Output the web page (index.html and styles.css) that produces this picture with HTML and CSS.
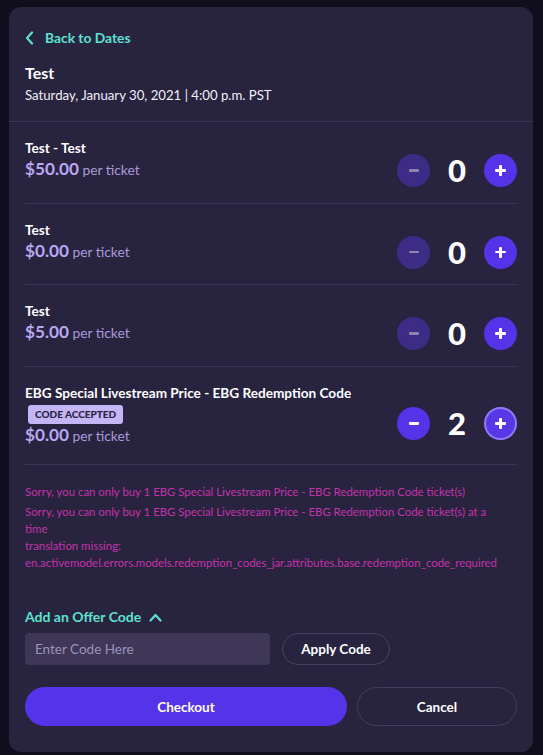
FILE: index.html
```html
<!DOCTYPE html>
<html>
<head>
<meta charset="utf-8">
<link rel="stylesheet" href="styles.css">
</head>
<body>
<div class="card">
  <div class="header">
    <a class="back">
      <svg width="9" height="14" viewBox="0 0 9 14"><path d="M7 1.5 L2 7 L7 12.5" fill="none" stroke="#5ce1cf" stroke-width="2.2" stroke-linecap="round" stroke-linejoin="round"/></svg>
      <span>Back to Dates</span>
    </a>
    <div class="title">Test</div>
    <div class="date">Saturday, January 30, 2021 | 4:00 p.m. PST</div>
  </div>
  <div class="tickets">
    <div class="row">
      <div class="info">
        <div class="name">Test - Test</div>
        <div class="price"><b>$50.00</b> per ticket</div>
      </div>
      <div class="qty">
        <button class="btn disabled"><span class="minus"></span></button>
        <span class="num">0</span>
        <button class="btn"><span class="plus"></span></button>
      </div>
    </div>
    <div class="row">
      <div class="info">
        <div class="name">Test</div>
        <div class="price"><b>$0.00</b> per ticket</div>
      </div>
      <div class="qty">
        <button class="btn disabled"><span class="minus"></span></button>
        <span class="num">0</span>
        <button class="btn"><span class="plus"></span></button>
      </div>
    </div>
    <div class="row">
      <div class="info">
        <div class="name">Test</div>
        <div class="price"><b>$5.00</b> per ticket</div>
      </div>
      <div class="qty">
        <button class="btn disabled"><span class="minus"></span></button>
        <span class="num">0</span>
        <button class="btn"><span class="plus"></span></button>
      </div>
    </div>
    <div class="row tall">
      <div class="info">
        <div class="name">EBG Special Livestream Price - EBG Redemption Code</div>
        <div class="badge">CODE ACCEPTED</div>
        <div class="price"><b>$0.00</b> per ticket</div>
      </div>
      <div class="qty">
        <button class="btn"><span class="minus"></span></button>
        <span class="num">2</span>
        <button class="btn focus"><span class="plus"></span></button>
      </div>
    </div>
  </div>
  <div class="errors">
    <p>Sorry, you can only buy 1 EBG Special Livestream Price - EBG Redemption Code ticket(s)</p>
    <p>Sorry, you can only buy 1 EBG Special Livestream Price - EBG Redemption Code ticket(s) at a time</p>
    <p>translation missing: en.activemodel.errors.models.redemption_codes_jar.attributes.base.redemption_code_required</p>
  </div>
  <div class="offer">
    <div class="offer-toggle">
      <span>Add an Offer Code</span>
      <svg width="13" height="9" viewBox="0 0 13 9"><path d="M1.5 7.5 L6.5 2 L11.5 7.5" fill="none" stroke="#5ce1cf" stroke-width="2.2" stroke-linecap="round" stroke-linejoin="round"/></svg>
    </div>
    <div class="offer-form">
      <input class="code" type="text" placeholder="Enter Code Here">
      <button class="apply">Apply Code</button>
    </div>
  </div>
  <div class="actions">
    <button class="checkout">Checkout</button>
    <button class="cancel">Cancel</button>
  </div>
</div>
</body>
</html>
```
FILE: styles.css
```css
* { box-sizing: border-box; }
html, body { margin: 0; padding: 0; }
body {
  background: #100d1c;
  font-family: Lato, "Noto Sans", sans-serif;
  color: #ffffff;
  width: 543px;
  height: 755px;
  overflow: hidden;
  padding: 7px 10px 0 9px;
}
.card {
  background: #28233f;
  border-radius: 12px;
  height: 745px;
  display: flex;
  flex-direction: column;
}
.header {
  padding: 22px 16px 17px;
  border-bottom: 1px solid #3b3554;
}
.back {
  display: flex;
  align-items: center;
  gap: 11px;
  color: #5ce1cf;
  font-weight: 700;
  font-size: 13.8px;
  line-height: 18px;
}
.title {
  margin-top: 16px;
  font-size: 16px;
  font-weight: 700;
  line-height: 20px;
}
.date {
  margin-top: 3px;
  font-size: 13.2px;
  line-height: 18px;
  color: #f2f0f7;
}
.tickets { padding: 0 16px; }
.row {
  display: flex;
  justify-content: space-between;
  align-items: flex-start;
  border-bottom: 1px solid #3b3554;
  height: 82px;
  padding-top: 17px;
}
.row:nth-child(2) { height: 81px; }
.row.tall { height: 98px; padding-top: 17px; }
.name {
  font-size: 13.6px;
  font-weight: 700;
  line-height: 18px;
}
.price {
  font-size: 13.8px;
  line-height: 24px;
  color: #a99bd9;
}
.price b {
  font-size: 17.2px;
  font-weight: 700;
  color: #b9a8f2;
}
.badge {
  display: inline-block;
  margin: 1px 0 0 3px;
  background: #c4b5f6;
  color: #28233f;
  font-size: 10px;
  font-weight: 900;
  line-height: 19px;
  padding: 0 7px;
  border-radius: 3px;
}
.tall .price { line-height: 22px; }
.qty {
  align-self: center;
  display: flex;
  align-items: center;
  margin-top: -1px;
}
.btn {
  width: 33px;
  height: 33px;
  border-radius: 50%;
  border: none;
  background: #5533e8;
  display: flex;
  align-items: center;
  justify-content: center;
  padding: 0;
}
.btn.disabled { background: #3d2c86; }
.btn.focus { box-shadow: inset 0 0 0 2px #8e7ae9; background: #5838e6; }
.minus {
  width: 10px;
  height: 2.5px;
  background: #ffffff;
  border-radius: 1px;
}
.disabled .minus { background: #8d86a6; }
.plus {
  width: 11px;
  height: 11px;
  position: relative;
}
.plus::before, .plus::after {
  content: "";
  position: absolute;
  background: #ffffff;
  border-radius: 1px;
}
.plus::before { left: 0; top: 4.25px; width: 11px; height: 2.5px; }
.plus::after { top: 0; left: 4.25px; width: 2.5px; height: 11px; }
.num {
  width: 54px;
  text-align: center;
  font-size: 31px;
  font-weight: 900;
  line-height: 33px;
}
.errors {
  padding: 18px 32px 0 16px;
  color: #c233a9;
  font-size: 11.4px;
  line-height: 17px;
}
.errors p { margin: 0; }
.errors p:first-child { margin-bottom: 3px; }
.offer { padding: 0 16px; margin-top: 37px; }
.offer-toggle {
  display: flex;
  align-items: center;
  gap: 8px;
  color: #5ce1cf;
  font-size: 14px;
  font-weight: 700;
  line-height: 18px;
}
.offer-form {
  display: flex;
  gap: 12px;
  margin-top: 7px;
}
.code {
  width: 245px;
  height: 32px;
  background: #3f3758;
  border: none;
  border-radius: 4px;
  padding: 0 10px;
  font-family: Lato, "Noto Sans", sans-serif;
  font-size: 13.5px;
  color: #ffffff;
}
.code::placeholder { color: #9b91ba; }
.apply {
  width: 108px;
  height: 32px;
  background: transparent;
  border: 1px solid #48415f;
  border-radius: 16px;
  color: #ffffff;
  font-family: Lato, "Noto Sans", sans-serif;
  font-weight: 700;
  font-size: 13.5px;
}
.actions {
  display: flex;
  gap: 10px;
  padding: 0 16px;
  margin-top: 22px;
}
.actions button {
  height: 39px;
  border-radius: 20px;
  font-family: Lato, "Noto Sans", sans-serif;
  font-weight: 700;
  font-size: 13.5px;
  color: #ffffff;
}
.checkout {
  width: 322px;
  background: #5533e8;
  border: none;
}
.cancel {
  flex: 1;
  background: transparent;
  border: 1px solid #433c5a;
}
```
